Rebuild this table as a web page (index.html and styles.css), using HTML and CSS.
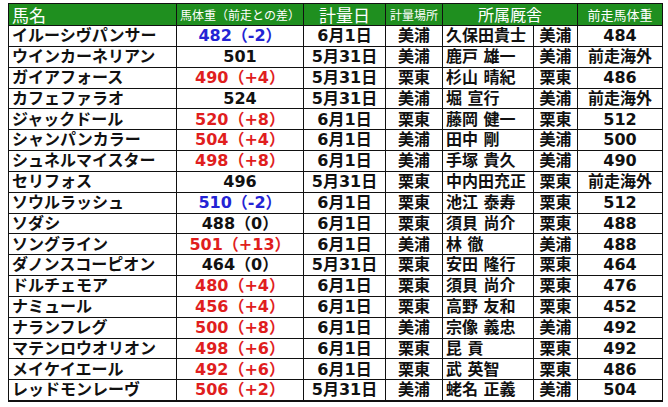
FILE: index.html
```html
<!DOCTYPE html>
<html lang="ja">
<head>
<meta charset="utf-8">
<link rel="stylesheet" href="styles.css">
</head>
<body>
<div class="sheet">
  <div class="th left big">馬名</div>
  <div class="th small">馬体重（前走との差）</div>
  <div class="th big">計量日</div>
  <div class="th small">計量場所</div>
  <div class="th mid span2">所属厩舎</div>
  <div class="th small2">前走馬体重</div>

  <div class="td left">イルーシヴパンサー</div><div class="td blue">482（-2）</div><div class="td">6月1日</div><div class="td">美浦</div><div class="td left">久保田貴士</div><div class="td">美浦</div><div class="td">484</div>
  <div class="td left">ウインカーネリアン</div><div class="td">501</div><div class="td">5月31日</div><div class="td">美浦</div><div class="td left">鹿戸 雄一</div><div class="td">美浦</div><div class="td">前走海外</div>
  <div class="td left">ガイアフォース</div><div class="td red">490（+4）</div><div class="td">5月31日</div><div class="td">栗東</div><div class="td left">杉山 晴紀</div><div class="td">栗東</div><div class="td">486</div>
  <div class="td left">カフェファラオ</div><div class="td">524</div><div class="td">5月31日</div><div class="td">美浦</div><div class="td left">堀 宣行</div><div class="td">美浦</div><div class="td">前走海外</div>
  <div class="td left">ジャックドール</div><div class="td red">520（+8）</div><div class="td">6月1日</div><div class="td">栗東</div><div class="td left">藤岡 健一</div><div class="td">栗東</div><div class="td">512</div>
  <div class="td left">シャンパンカラー</div><div class="td red">504（+4）</div><div class="td">6月1日</div><div class="td">美浦</div><div class="td left">田中 剛</div><div class="td">美浦</div><div class="td">500</div>
  <div class="td left">シュネルマイスター</div><div class="td red">498（+8）</div><div class="td">6月1日</div><div class="td">美浦</div><div class="td left">手塚 貴久</div><div class="td">美浦</div><div class="td">490</div>
  <div class="td left">セリフォス</div><div class="td">496</div><div class="td">5月31日</div><div class="td">栗東</div><div class="td left">中内田充正</div><div class="td">栗東</div><div class="td">前走海外</div>
  <div class="td left">ソウルラッシュ</div><div class="td blue">510（-2）</div><div class="td">6月1日</div><div class="td">栗東</div><div class="td left">池江 泰寿</div><div class="td">栗東</div><div class="td">512</div>
  <div class="td left">ソダシ</div><div class="td">488（0）</div><div class="td">6月1日</div><div class="td">栗東</div><div class="td left">須貝 尚介</div><div class="td">栗東</div><div class="td">488</div>
  <div class="td left">ソングライン</div><div class="td red">501（+13）</div><div class="td">6月1日</div><div class="td">美浦</div><div class="td left">林 徹</div><div class="td">美浦</div><div class="td">488</div>
  <div class="td left">ダノンスコーピオン</div><div class="td">464（0）</div><div class="td">5月31日</div><div class="td">栗東</div><div class="td left">安田 隆行</div><div class="td">栗東</div><div class="td">464</div>
  <div class="td left">ドルチェモア</div><div class="td red">480（+4）</div><div class="td">6月1日</div><div class="td">栗東</div><div class="td left">須貝 尚介</div><div class="td">栗東</div><div class="td">476</div>
  <div class="td left">ナミュール</div><div class="td red">456（+4）</div><div class="td">6月1日</div><div class="td">栗東</div><div class="td left">高野 友和</div><div class="td">栗東</div><div class="td">452</div>
  <div class="td left">ナランフレグ</div><div class="td red">500（+8）</div><div class="td">6月1日</div><div class="td">美浦</div><div class="td left">宗像 義忠</div><div class="td">美浦</div><div class="td">492</div>
  <div class="td left">マテンロウオリオン</div><div class="td red">498（+6）</div><div class="td">6月1日</div><div class="td">栗東</div><div class="td left">昆 貢</div><div class="td">栗東</div><div class="td">492</div>
  <div class="td left">メイケイエール</div><div class="td red">492（+6）</div><div class="td">6月1日</div><div class="td">栗東</div><div class="td left">武 英智</div><div class="td">栗東</div><div class="td">486</div>
  <div class="td left">レッドモンレーヴ</div><div class="td red">506（+2）</div><div class="td">5月31日</div><div class="td">美浦</div><div class="td left">蛯名 正義</div><div class="td">美浦</div><div class="td">504</div>
</div>
</body>
</html>
```

FILE: styles.css
```css
html, body {
  margin: 0;
  padding: 0;
  background: #ffffff;
}

body {
  width: 668px;
  height: 407px;
  overflow: hidden;
}

.sheet {
  margin: 3px 0 0 8px;
  width: 655px;
  height: 399px;
  box-sizing: border-box;
  display: grid;
  grid-template-columns: 167px 126px 81px 56px 90px 43px 84px;
  grid-template-rows: 21px repeat(18, 1fr);
  gap: 1px;
  padding: 1px 2px 2px 1px;
  background: #111111;
}

.th, .td {
  display: flex;
  align-items: center;
  justify-content: center;
  white-space: nowrap;
}

.th {
  background: #1f8f1f;
  color: #ffffff;
  font-family: "Noto Sans CJK JP", sans-serif;
  font-weight: 400;
  line-height: 21px;
  overflow: visible;
}

.th.big { font-size: 17px; }
.th.mid { font-size: 16px; }
.th.small { font-size: 12px; }
.th.small2 { font-size: 13px; }
.th.span2 { grid-column: span 2; }

.td {
  background: #ffffff;
  color: #111111;
  font-family: "DejaVu Sans", "Noto Sans CJK JP", sans-serif;
  font-weight: 700;
  font-size: 16px;
  line-height: 1.2;
  overflow: hidden;
}

.left {
  justify-content: flex-start;
  padding-left: 3px;
}

.blue { color: #2424d4; }
.red { color: #e01e1e; }
```
